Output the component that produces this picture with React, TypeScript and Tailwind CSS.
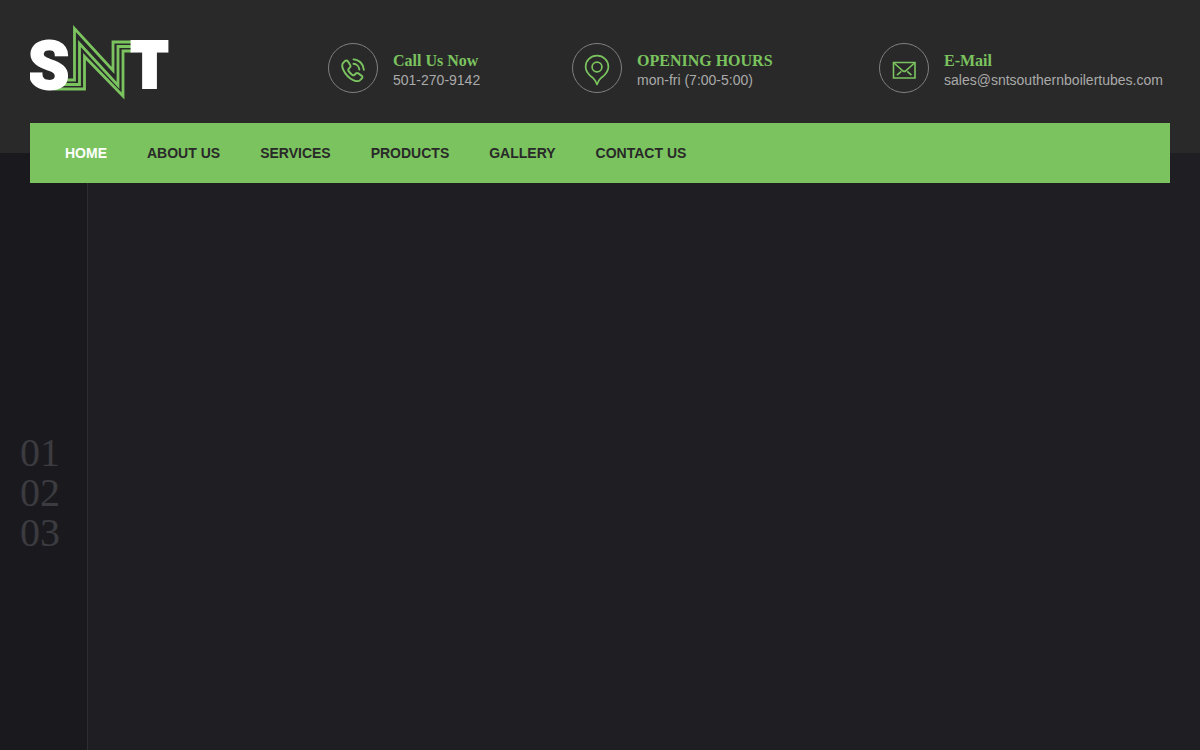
import type { ReactNode } from "react";

const navLinks = ["Home", "About Us", "Services", "Products", "Gallery", "Contact Us"];

const slides = ["01", "02", "03"];

function Logo() {
  return (
    <svg width="150" height="99" viewBox="0 -12 150 99" role="img" aria-label="SNT">
      <g fill="none" stroke="#7bc35f" strokeWidth="2.800" strokeMiterlimit="10">
        <path d="M30 56H44.500V4.500L83 46.500V18H102" />
        <path d="M28 60.500H49.500V19.500L88 61.500V22.500H102" />
        <path d="M24 65H54.500V32.500L93 72V27H102" />
      </g>
      <g fill="#ffffff" stroke="#ffffff">
        <text x="-2" y="65" strokeWidth="2" fontSize="66" className="font-['Roboto'] font-black">S</text>
        <text x="100" y="64" strokeWidth="2" fontSize="66" className="font-['Open_Sans'] font-extrabold">T</text>
      </g>
    </svg>
  );
}

function PhoneIcon() {
  return (
    <svg width="24" height="24" viewBox="0 0 25 25" fill="none" stroke="#7bc35f" strokeWidth="2" strokeLinecap="round" strokeLinejoin="round">
      <path d="M4.200 3.200L2.500 4.800C.9 6.300 1 9 2.300 12c2.200 4.800 5.600 8.600 10.400 11.100 2.700 1.300 5.600 1.400 7.200-.1l1.900-1.900c.8-.9.700-1.800-.2-2.500l-3.600-2.600c-.9-.6-1.800-.5-2.500.2l-1.300 1.300c-.7.7-1.600.7-2.400.1-1.600-1.200-2.900-2.500-4-4.200-.5-.9-.4-1.700.3-2.400l1.200-1.200c.7-.7.8-1.500.3-2.400L7.200 3.500c-.8-1.100-2-1.200-3-.3z" />
      <path d="M13 1.400c5.800.2 10.500 4.900 10.800 10.800" />
      <path d="M13 6c3.200.2 5.800 2.800 6.100 6" />
    </svg>
  );
}

function PinIcon() {
  return (
    <svg width="26" height="32" viewBox="0 0 26 32" fill="none" stroke="#7bc35f" strokeWidth="1.700" strokeLinejoin="round">
      <path d="M13 30.500c-1-2.800-2.200-5-4.300-6.800C4.800 20.800 1.600 18 1.600 12.700 1.600 6.500 6.700 1.600 13 1.600s11.400 4.900 11.400 11.100c0 5.300-3.200 8.100-7.100 11-2.100 1.800-3.300 4-4.300 6.800z" />
      <circle cx="13" cy="13" r="4.900" />
    </svg>
  );
}

function MailIcon() {
  return (
    <svg width="24" height="18" viewBox="0 0 24 18" fill="none" stroke="#7bc35f" strokeWidth="1.600">
      <path d="M1.500 1.500h21.500v15.500H1.500z" />
      <path d="M2 2L10.800 9.800c.9.800 2 .8 2.900 0L22.500 2" />
      <path d="M5 14.200l4.300-3.900M19.500 14.200l-4.300-3.900" />
    </svg>
  );
}

function InfoBox({ icon, title, children }: { icon: ReactNode; title: string; children: ReactNode }) {
  return (
    <div className="flex items-center gap-[15px]">
      <div className="flex size-[50px] shrink-0 items-center justify-center rounded-full border border-[#808080] pt-1">
        {icon}
      </div>
      <div className="pt-1 text-sm leading-[18px] whitespace-nowrap text-[#aaaaaa]">
        <h3 className="font-['Liberation_Serif',serif] text-base leading-5 font-bold text-[#7bc35f]">{title}</h3>
        {children}
      </div>
    </div>
  );
}

export default function App() {
  return (
    <div className="flex min-h-screen flex-col bg-[#1e1e23] font-['Liberation_Sans',sans-serif]">

      {/* Header */}
      <header className="bg-[#292929] px-[30px]">
        <div className="flex py-3">
          <a href="#" className="w-[298px] shrink-0">
            <Logo />
          </a>

          <div className="grid flex-1 grid-cols-[244fr_307fr_291fr] items-center pt-[13px]">
            <InfoBox icon={<PhoneIcon />} title="Call Us Now">
              <a href="tel:501-270-9142" className="block">501-270-9142</a>
            </InfoBox>
            <InfoBox icon={<PinIcon />} title="OPENING HOURS">
              <p>mon-fri (7:00-5:00)</p>
            </InfoBox>
            <InfoBox icon={<MailIcon />} title="E-Mail">
              <a href="mailto:sales@sntsouthernboilertubes.com" className="block">sales@sntsouthernboilertubes.com</a>
            </InfoBox>
          </div>
        </div>

        {/* Main menu, hangs over the slider */}
        <nav className="relative -mb-[30px] flex h-[60px] items-center gap-10 bg-[#7bc35f] px-[35px]">
          {navLinks.map((link, i) => (
            <a
              key={link}
              href="#"
              className={i === 0 ? "text-sm font-bold text-white uppercase" : "text-sm font-bold text-[#292929] uppercase"}
            >
              {link}
            </a>
          ))}
        </nav>
      </header>

      {/* Slider */}
      <main className="flex flex-1">
        <div className="flex w-[88px] flex-col items-start border-r border-[#2d2d32] bg-[#1a1a1e] pt-[280px] pl-5">
          {slides.map((slide) => (
            <button key={slide} type="button" className="font-['Liberation_Serif',serif] text-[40px] leading-10 text-[#3b3b40]">
              {slide}
            </button>
          ))}
        </div>
      </main>
    </div>
  );
}
